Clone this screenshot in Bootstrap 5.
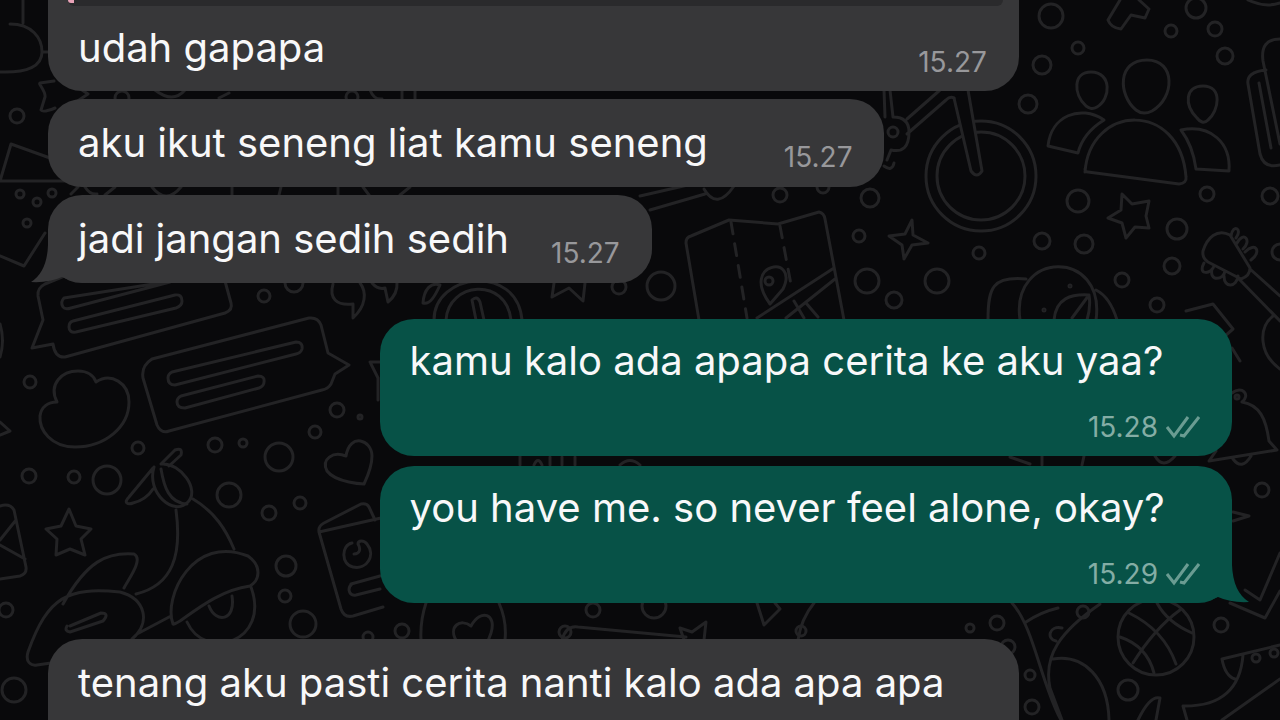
<!DOCTYPE html>
<html lang="id">
<head>
<meta charset="utf-8">
<meta name="viewport" content="width=device-width, initial-scale=1">
<title>Chat</title>
<link href="https://cdn.jsdelivr.net/npm/bootstrap@5.3.0/dist/css/bootstrap.min.css" rel="stylesheet">
<style>
  body { background: #09090b; font-family: Inter, "Liberation Sans", sans-serif; }
  .chat { padding: 0 48px; }
  .wallpaper { z-index: 0; }
  .wallpaper svg { fill: none; stroke: #232325; stroke-width: 3; stroke-linecap: round; stroke-linejoin: round; }
  .thread { z-index: 1; }
  .bubble { border-radius: 34px; padding: 16px 32px 16px 30px; font-size: 40px; line-height: 56px; color: #f8f8f9; column-gap: 42px; }
  .bubble-in { background: #373739; }
  .bubble-out { background: #075247; padding: 14px 32px 13px 30px; width: 72%; }
  .bubble-first { border-top-left-radius: 0; border-top-right-radius: 0; padding-top: 0; padding-bottom: 15px; }
  .bubble-last { padding-bottom: 64px; }
  .wide-bubble { width: 82%; }
  .quoted { height: 6px; background: #2a2a2c; border-radius: 0 0 14px 14px; margin: 0 -16px 14px -10px; flex: 0 0 calc(100% + 26px); }
  .quoted span { width: 6px; height: 3px; background: #e9a3b8; border-bottom-left-radius: 6px; }
  .time-apart { margin-left: 34px; }
  .stamp { font-size: 28px; line-height: 32px; color: #98989b; margin-bottom: -2px; }
  .bubble-out .stamp { color: #84ada5; margin-bottom: 0; margin-top: 22px; }
  .stamp svg { fill: none; stroke: #6a9c92; stroke-width: 3; }
  .tail { bottom: 0; }
  .tail-left { left: -17px; }
  .tail-right { right: -17px; }
  .turn { margin-top: 36px; }
  .follow-up { margin-top: 10px; }
</style>
</head>
<body>
<main class="chat position-relative vh-100 overflow-hidden">
  <div class="wallpaper position-absolute top-0 start-0 w-100 h-100" aria-hidden="true">
    <svg class="w-100 h-100" viewBox="0 0 1280 720" preserveAspectRatio="xMidYMid slice">
      <!-- dots -->
      <g>
        <circle cx="1051" cy="16" r="12"/><circle cx="1078" cy="48" r="6"/><circle cx="1042" cy="65" r="9"/><circle cx="1028" cy="104" r="9"/>
        <circle cx="1196" cy="8" r="10"/><circle cx="1171" cy="31" r="6"/><circle cx="1215" cy="29" r="7"/><circle cx="1225" cy="56" r="8"/>
        <circle cx="1078" cy="201" r="11"/><circle cx="1042" cy="241" r="8"/><circle cx="1084" cy="244" r="9"/><circle cx="1177" cy="229" r="10"/>
        <circle cx="1207" cy="194" r="7"/><circle cx="1270" cy="196" r="8"/><circle cx="1280" cy="252" r="8"/><circle cx="1172" cy="266" r="8"/>
        <circle cx="1122" cy="280" r="7"/><circle cx="1157" cy="305" r="7"/><circle cx="979" cy="253" r="6"/><circle cx="937" cy="281" r="12"/>
        <circle cx="894" cy="300" r="8"/><circle cx="867" cy="281" r="12"/><circle cx="859" cy="236" r="6"/><circle cx="870" cy="198" r="9"/>
        <circle cx="823" cy="187" r="6"/><circle cx="780" cy="195" r="7"/><circle cx="661" cy="286" r="14"/><circle cx="619" cy="287" r="7"/>
        <circle cx="17" cy="116" r="7"/><circle cx="20" cy="194" r="4"/><circle cx="37" cy="202" r="4"/><circle cx="52" cy="193" r="4"/><circle cx="27" cy="223" r="4"/>
        <circle cx="264" cy="296" r="6"/><circle cx="294" cy="283" r="9"/><circle cx="30" cy="382" r="6"/><circle cx="138" cy="448" r="6"/>
        <circle cx="215" cy="445" r="7"/><circle cx="243" cy="443" r="4"/><circle cx="279" cy="457" r="14"/><circle cx="315" cy="432" r="6"/>
        <circle cx="337" cy="410" r="7"/><circle cx="360" cy="417" r="2"/><circle cx="29" cy="476" r="7"/><circle cx="74" cy="477" r="6"/>
        <circle cx="107" cy="480" r="14"/><circle cx="229" cy="495" r="12"/><circle cx="269" cy="513" r="7"/><circle cx="300" cy="503" r="6"/>
        <circle cx="286" cy="566" r="10"/><circle cx="285" cy="596" r="6"/><circle cx="303" cy="624" r="13"/><circle cx="368" cy="637" r="5"/>
        <circle cx="6" cy="610" r="7"/><circle cx="14" cy="690" r="12"/><circle cx="402" cy="631" r="7"/><circle cx="593" cy="610" r="7"/>
        <circle cx="565" cy="632" r="6"/><circle cx="654" cy="606" r="12"/><circle cx="801" cy="631" r="5"/><circle cx="970" cy="628" r="4"/>
        <circle cx="997" cy="623" r="7"/><circle cx="1030" cy="675" r="5"/><circle cx="1032" cy="707" r="7"/><circle cx="1128" cy="690" r="10"/>
        <circle cx="1221" cy="625" r="7"/><circle cx="1262" cy="490" r="7"/><circle cx="1008" cy="647" r="7"/><circle cx="1083" cy="612" r="6"/>
        <circle cx="122" cy="98" r="7"/><circle cx="352" cy="97" r="6"/>
      </g>
      <!-- loose loops and star on the upper left -->
      <path d="M23 0v23M10 24c22 0 32 14 32 28S28 73 0 72M42 52h8"/>
      <path d="M54 81l-14 2c-2 1 6 8 5 14l-4 13q2 3 14-2M76 86l12 8-12 8M155 90q18 14 30 0M219 98l10-5M370 90q4 10 12 9M402 90v9M415 90v9"/>
      <path d="M50 158L11 144 0 181h68M0 256l24 10L45 233M71 194l7-7M85 187q5 8 12 7M105 195l10-8M152 187q14 18 29 0M232 187v8M281 187l-2 8M338 187v8M363 187l6 8M400 195l10-8"/>
      <!-- chat bubbles -->
      <path d="M62 277l-17 7q-8 4-7 12l5 24-11 28 21-4q2 14 12 13l160-44q8-3 6-10l-6-22"/>
      <path d="M166 282L64 298q-4 4-1 9 2 3 8 1l99-26M73 321l102-26q7-1 7 6 0 5-6 7L76 332q-7 1-7-5 0-5 4-6"/>
      <path d="M152 359l157-41q9-1 12 7l7 28 21 12-14 9-4 10q-3 5-9 6l-153 41q-8 3-12-6l-14-47q-2-12 9-19z"/>
      <path d="M172 372l124-30q7 0 6 7-1 4-6 5l-121 31q-7 0-7-7 0-4 4-6zM181 396l77-20q7 0 6 6 0 4-5 6l-74 20q-8 0-8-6 0-4 4-6z"/>
      <!-- cloud -->
      <path d="M57 402c-9-18 5-31 21-31 10 0 16 5 18 11 15-10 33 1 33 20 0 25-24 45-54 45-24 0-36-17-35-31 1-9 8-14 17-14z"/>
      <path d="M0 422l10 9-10 4M0 324q5 17 0 33"/>
      <!-- quotation marks -->
      <path d="M333 284c-4 14 3 22 20 20v14c13-12 14-26 7-35M372 283q6 7 13 5l3 14q10-8 9-20M440 285c-9-3-16 4-17 18 7 2 12-7 17-18"/>
      <!-- clock -->
      <path d="M434 320c0-47 83-57 88 0M446 320c2-38 60-44 65 0M476 320l-4-20q5-5 8 2l4 18M554 283l-2 14 17-9 14 13 2-18"/>
      <!-- hearts -->
      <path d="M346 456c4-24 26-16 26 0 0 11-8 28-8 28s-28-1-37-13c-6-12 6-20 19-15z"/>
      <path d="M457 642c-10-16 4-24 14-16 10-18 26-12 20 7l-3 8M426 603q-6 18-5 37M499 603q8 18 6 37M562 640q4-15 16-13l108 10M684 640l-4-12 12 4 14-10-2 18M757 603l7 22 16-16-5-6M814 603q-13 16-16 37"/>
      <!-- scooter -->
      <path d="M161 464l14-14q8-3 6 5l-12 11M153 468l-24 29c-6 6-1 8 4 6 8-2 15-6 20-14M154 467c-8 26 20 50 34 35 12-12-7-39-26-38M161 469c3 18 8 34 26 35M176 510c6 45-3 75-40 84M193 499c22 13 33 31 41 50M63 604c24-43 44-52 71-50 10 5-6 26-10 34M28 652c20-56 40-65 92-60 26 7 31 31 12 47M137 634l34-18M173 624c-10-27 20-90 75-68 14 10 12 24 2 30-28 4-49 20-70 35q-7 4-7 3M187 622c18 40 84 20 64-35M209 606c7 18 27 15 23-10M70 626l31-13q9 0 2 8l-33 11q-6-1-3-6M28 652c-3 10 3 14 9 13l14-2"/>
      <!-- star, envelope -->
      <path d="M69 509l7 17 15 3-10 10 4 16-15-6-14 6 1-16-11-10 15-3z"/>
      <path d="M0 506q10-3 14 4l12 57q1 7-6 9l-20 3M16 520L0 540M0 545l25 14"/>
      <!-- cup -->
      <path d="M319 532q-1-6 5-9l37-19q6-1 8 3l6 13M319 532l62-14M319 532l22 77q3 9 12 7l30-9M351 584l29-8M380 589l-24 6q-6 1-7-5 0-4 3-6M352 543c-11 2-11 22 1 24 14 3 23-12 14-23-3-4-9-4-9 0 3 5 2 10-4 10"/>
      <!-- bicycle -->
      <circle cx="981" cy="176" r="55"/><circle cx="981" cy="176" r="44"/>
      <path fill="#09090b" d="M954 98l17 73q6 8 11 0L968 90"/>
      <path d="M954 98q-4-2-8 2L907 134M940 90l-33 29M884 90l1 27M890 90l3 27q16 0 16 15 0 22-18 18l-4 10M884 166q8 6 10-3"/><circle cx="893" cy="132" r="5"/>
      <!-- people -->
      <path d="M1147 60c29 0 28 38 5 51-6 3-11 3-16-1-18-15-19-50 11-50zM1091 72c21 0 20 27 6 35-5 3-8 1-11-1-13-12-13-34 5-34zM1203 86c20 0 16 25 5 34-4 4-8 2-11-2-13-13-12-32 6-32zM1085 172c5-68 95-72 101 5q1 6-7 7l-91-12q-3 0-3-3M1104 120c-24-16-53-4-56 26l30 7q5-20 26-33M1181 130c30-6 50 13 48 41l-33-2q-3-23-15-39"/>
      <path d="M1122 194l10 10 17-3-3 15 3 12-14-1-9 11-4-15-14-5 13-8zM912 220l1 15 15 8-16 2-8 14-2-14-13-9 16-2z"/>
      <path d="M1120 0l-12 20q3 8 13 9l10-14 14 3 4-9-10-9M1248 0q17 8 32 3M1280 39q-20 0-17 22l17 83M1266 70q-20 2-18 14l12 70q4 15 20 11M1259 83l12 65"/>
      <!-- map -->
      <path d="M699 320l-13-77q0-6 5-7l38-16 49 4 41-12q5 1 6 7l19 101M757 318l77-50M786 318l49-39M794 301l10 17M806 303l12 14"/>
      <path d="M731 222l16 96M780 226l12 64" stroke-dasharray="12 10"/>
      <path d="M770 304c-31-42 30-50 13-15z"/><circle cx="769" cy="281" r="4"/>
      <path d="M640 196l61-14M650 210l55-16M704 189q13 22 30-3"/>
      <!-- ball and leaf -->
      <path d="M988 320c0-32 4-44 38-41M1020 320c-10-70 86-72 76 0M1054 320c2-22 17-26 35-25l-17 23M1089 295q2 12-2 25M1096 290q14 7 21 30"/><circle cx="1070" cy="286" r="1"/><circle cx="1044" cy="310" r="1"/>
      <!-- guitar and bell -->
      <path d="M1203 251c4-13 14-23 27-16l20 33q0 8-9 11l-33-17q-6-4-5-11zM1231 236c2-13 12-7 5 2M1237 243c7-13 15-2 6 6M1245 252c11-11 17 0 6 8M1204 263c-7 13 8 11 10 3M1212 269c-3 13 12 11 13 2M1224 276c0 13 13 11 14 0M1250 269l30 27M1238 278l42 43M1273 316c-15 12-14 38 7 53M1186 311l27-7 20 25-8 7M1232 348l8 13M1232 393c10-8 19 2 10 9 18 3 24 17 27 39l8 9-68 11 7-10M1233 459q9 12 18-3"/><circle cx="1237" cy="397" r="2"/>
      <path d="M1155 456q8 14 20 0M1010 457l20 7M1042 456v9M1084 456l-2 9M520 456v9M534 465q4-9 8 0M550 457v8M562 457v8M575 457v8M620 465q10-9 20 0"/>
      <path d="M1233 512l16 4-16 5M1245 590l15 10 20-47M1230 603l35 15 15-27"/>
      <!-- basketball and surrounding objects -->
      <circle cx="1156" cy="637" r="38"/><path d="M1129 613q35 17 47 51M1120 637q27 9 34 36M1180 610q-25 18-47 53M1157 603q10 19 35 30"/>
      <path d="M1012 603c22 24 29 81 49 117M1026 622q15-10 32-14M1100 604c-39 27-57 51-50 84l12 32M1056 641c-10-2-7-16 6-13M1053 659c31-5 55 19 56 61M1138 720q12-25 22-22l-4 22M1280 645l-58 14q3 17 13 20M1243 655q-4 52-60 51l4 14M1222 720l58-41"/><circle cx="1256" cy="658" r="4"/><circle cx="1274" cy="653" r="4"/>
      <path d="M370 362h12M370 362l8 16v22"/>
    </svg>
  </div>

  <section class="thread position-relative d-flex flex-column align-items-start" aria-label="Messages">
    <article class="bubble bubble-in bubble-first wide-bubble d-flex flex-wrap align-items-end justify-content-between">
      <div class="quoted"><span class="d-block"></span></div>
      <span>udah gapapa</span>
      <time class="stamp" datetime="15:27">15.27</time>
    </article>

    <article class="bubble bubble-in d-flex align-items-end mt-2">
      <span>aku ikut seneng liat kamu seneng</span>
      <time class="stamp time-apart" datetime="15:27">15.27</time>
    </article>

    <article class="bubble bubble-in position-relative d-flex align-items-end mt-2">
      <svg class="tail tail-left position-absolute" width="60" height="50" viewBox="0 0 60 50" aria-hidden="true"><path fill="#373739" d="M17 0v12Q16 39 0 49q18 1 31-5 12 6 29 6V0z"/></svg>
      <span class="position-relative">jadi jangan sedih sedih</span>
      <time class="stamp" datetime="15:27">15.27</time>
    </article>

    <article class="bubble bubble-out turn align-self-end d-flex flex-column">
      <span>kamu kalo ada apapa cerita ke aku yaa?</span>
      <span class="stamp align-self-end d-flex align-items-center gap-2"><time datetime="15:28">15.28</time>
        <svg width="34" height="24" viewBox="0 0 34 24" role="img" aria-label="Delivered"><path d="M1 12l7 9L22 2M14 20l4 1L33 2"/></svg></span>
    </article>

    <article class="bubble bubble-out follow-up position-relative align-self-end d-flex flex-column">
      <svg class="tail tail-right position-absolute" width="60" height="50" viewBox="0 0 60 50" aria-hidden="true"><path fill="#075247" d="M43 0v12Q44 39 60 49q-18 1-31-5-12 6-29 6V0z"/></svg>
      <span>you have me. so never feel alone, okay?</span>
      <span class="stamp position-relative align-self-end d-flex align-items-center gap-2"><time datetime="15:29">15.29</time>
        <svg width="34" height="24" viewBox="0 0 34 24" role="img" aria-label="Delivered"><path d="M1 12l7 9L22 2M14 20l4 1L33 2"/></svg></span>
    </article>

    <article class="bubble bubble-in bubble-last wide-bubble turn">
      <span>tenang aku pasti cerita nanti kalo ada apa apa</span>
    </article>
  </section>
</main>
<script src="https://cdn.jsdelivr.net/npm/bootstrap@5.3.0/dist/js/bootstrap.bundle.min.js"></script>
</body>
</html>
